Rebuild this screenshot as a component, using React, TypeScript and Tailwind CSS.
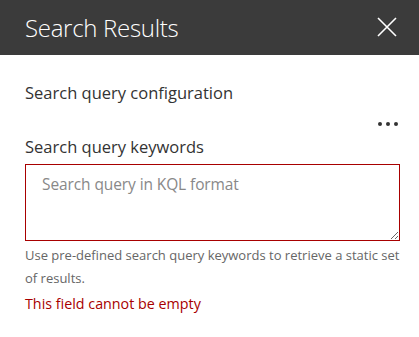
import React from "react";

export default function App() {
  const font = { fontFamily: '"Open Sans", "Noto Sans", sans-serif' };
  return (
    <div className="w-[419px] h-[337px] bg-white overflow-hidden" style={font}>
      <div className="h-[55px] bg-[#3b3b3b] flex items-center justify-between pl-[25px] pr-[21px]">
        <span className="text-[24px] font-light text-white leading-none tracking-[-0.3px]">Search Results</span>
        <svg width="22" height="20" viewBox="0 0 22 20" className="mt-[-2px]">
          <path d="M2 1 L20 19 M20 1 L2 19" stroke="#ffffff" strokeWidth="1.6" fill="none" />
        </svg>
      </div>
      <div className="px-[25px] pr-[19px] flex flex-col">
        <div className="mt-[26px] leading-[24px] text-[16.5px] text-[#333333]">Search query configuration</div>
        <div className="mt-[15px] h-[8px] flex justify-end items-center gap-[4px] pr-[2px]">
          <span className="w-[4px] h-[4px] rounded-full bg-[#333333]" />
          <span className="w-[4px] h-[4px] rounded-full bg-[#333333]" />
          <span className="w-[4px] h-[4px] rounded-full bg-[#333333]" />
        </div>
        <div className="mt-[7px] leading-[24px] text-[16.5px] text-[#333333]">Search query keywords</div>
        <textarea
          className="mt-[5px] w-[375px] h-[77px] border border-[#a80000] outline-none px-[16px] pt-[8px] text-[15.5px] text-[#333333] placeholder:text-[#888888] resize-y tracking-[-0.1px]"
          placeholder="Search query in KQL format"
          style={font}
        />
        <div className="mt-[3px] text-[13px] leading-[23px] text-[#666666] w-[378px]">
          Use pre-defined search query keywords to retrieve a static set of results.
        </div>
        <div className="mt-[4px] text-[14.3px] leading-[20px] text-[#a80000]">This field cannot be empty</div>
      </div>
    </div>
  );
}
